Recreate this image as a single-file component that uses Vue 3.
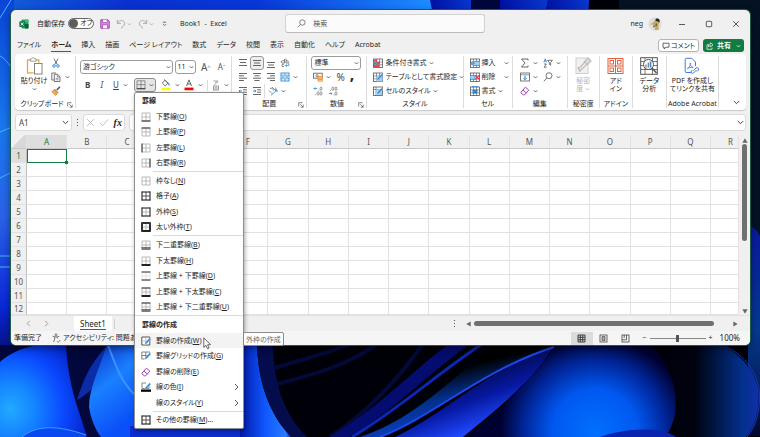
<script setup>
import { h } from 'vue'

const K = '#555'
const B = '#2b88d8'
const chev = '<path d="M.8 1.3 2.5 3 4.2 1.3" fill="none" stroke="#444" stroke-width=".8"/>'
const lines = (rows) => rows.map(([x, y, w]) => `<path d="M${x} ${y}h${w}" stroke="${K}" stroke-width=".9"/>`).join('')
const table = `<rect x=".5" y="1" width="9" height="8.5" fill="#fff" stroke="${K}" stroke-width=".8"/><path d="M.5 4h9M.5 6.8h9M3.5 1v8.5M6.5 1v8.5" stroke="${K}" stroke-width=".6"/>`
const pen = `<path d="M3.6 8.6 4.3 6.4 8.6 1.8 10 3.2 5.7 7.8Z" fill="${B}" stroke="#fff" stroke-width=".4"/>`
const eraser = '<path d="M1 6.2 5.4 1.2 8.8 4.2 4.6 8.8H3.3L1 6.9ZM2.9 4.1 6.4 7" fill="#fff" stroke="#a33fb5" stroke-width="1"/>'

const icons = {
  excel: [10, 10, '<rect x="2.5" y=".5" width="7" height="9" rx=".8" fill="#21a366"/><path d="M6 .5h2.7a.8.8 0 0 1 .8.8V3H6Z" fill="#33c481"/><path d="M6 5h3.500v3.700a.8.8 0 0 1-.8.8H6Z" fill="#185c37"/><rect x=".3" y="2.200" width="5.800" height="5.800" rx=".7" fill="#107c41"/><path d="m1.900 3.600 2.600 3M4.500 3.600l-2.600 3" stroke="#fff" stroke-width=".9"/>'],
  save: [10, 10, '<path d="M.8.8h7l1.400 1.400v7H.8Z" fill="#d99be0" stroke="#a33fb5" stroke-width="1"/><path d="M2.600.8v2.900h4.600V.8" fill="#fff" stroke="#a33fb5" stroke-width=".8"/><path d="M2.400 9.200V5.800h5.200v3.400" fill="#fff" stroke="#a33fb5" stroke-width=".8"/>'],
  undo: [10, 10, '<path d="M1.300.8v3.600h3.600M1.500 4.200C3.200 1.300 6 .8 7.600 2.300c1.700 1.600 1.100 3.500-.3 4.900L5 9.300" fill="none" stroke="#aaa"/>'],
  redo: [10, 10, '<path d="M8.700.8v3.600H5.100M8.500 4.200C6.800 1.300 4 .8 2.400 2.300.7 3.900 1.300 5.800 2.700 7.200L5 9.300" fill="none" stroke="#aaa"/>'],
  qat: [5, 6, '<path d="M.8 1.200h3.400M.9 3 2.500 4.600 4.100 3" fill="none" stroke="#555" stroke-width=".8"/>'],
  chev: [5, 4, chev],
  chevPale: [5, 4, chev.replace('#444', '#aaa')],
  chevWhite: [5, 4, chev.replace('#444', '#fff')],
  chevBig: [7, 5, '<path d="M.8 1 3.500 3.700 6.200 1" fill="none" stroke="#444"/>'],
  search: [9, 9, '<circle cx="5.400" cy="3.500" r="2.700" fill="none" stroke="#666" stroke-width=".8"/><path d="M3.500 5.400.7 8.300" stroke="#666" stroke-width=".8"/>'],
  avatar: [14, 14, '<defs><clipPath id="face"><circle cx="7" cy="7" r="6.700"/></clipPath></defs><g clip-path="url(#face)"><rect width="14" height="14" fill="#dedede"/><path d="M6 4.200c2-1.400 5-.6 5.200 1.600.1 1.700-.9 2.400-.8 4.200l.8 3H6.600l.5-3.600C5.500 9 5 8.400 4.600 7.600L1 7.200l3.400-.9Z" fill="#c6ab62"/><path d="M7.200 3.400c.2-2.200 3.800-2.600 4.300-.2l.3 2.200-2-1Z" fill="#222"/><path d="M8.200 6.500v2.700M5 10l2-1" stroke="#3a3326" stroke-width=".9"/></g>'],
  min: [8, 8, '<path d="M1 4.500h6" stroke="#333" stroke-width=".8"/>'],
  max: [8, 8, '<rect x="1.300" y="1.300" width="5.400" height="5.400" rx=".8" fill="none" stroke="#333" stroke-width=".8"/>'],
  close: [8, 8, '<path d="m1.200 1.200 5.600 5.600M6.800 1.200 1.200 6.800" stroke="#333" stroke-width=".8"/>'],
  comment: [8, 8, '<path d="M1 1.200h6v4H3.800L2.200 7V5.200H1Z" fill="none" stroke="#444" stroke-width=".8"/>'],
  share: [8, 8, '<path d="M3 2.800H1v4.500h5V5.500M4.600.8 7 2.800 4.600 4.700V3.600C3.400 3.600 2.700 4.200 2.400 5c0-1.900.8-3 2.200-3.100Z" fill="none" stroke="#fff" stroke-width=".7"/>'],
  paste: [17, 18, '<path d="M4.500 2.800h-3v13h6M10 2.800h2.800v3" fill="none" stroke="#f0a33a" stroke-width="1.300"/><path d="M4.300 1.900h1.300c.3-1.500 2.900-1.500 3.200 0h1.300v2.300H4.300Z" fill="#fff" stroke="#888" stroke-width=".8"/><rect x="8.500" y="6.500" width="7.500" height="10.500" fill="#fff" stroke="#777" stroke-width=".9"/>'],
  cut: [10, 10, `<path d="m3 .6 3.200 6M7 .6l-3.200 6" stroke="${K}" stroke-width=".8"/><circle cx="3" cy="8" r="1.300" fill="none" stroke="${B}" stroke-width=".9"/><circle cx="7" cy="8" r="1.300" fill="none" stroke="${B}" stroke-width=".9"/>`],
  copy: [10, 10, `<path d="M3.200 8H.8V1h4.400" fill="none" stroke="${K}" stroke-width=".8"/><path d="M3.300 2.300h3.200L9 4.700v4.800H3.300Z" fill="#fff" stroke="${K}" stroke-width=".8"/><path d="M6.300 2.500V5H9M4.600 6.300h3M4.600 7.800h3" fill="none" stroke="${K}" stroke-width=".6"/>`],
  brush: [10, 10, '<path d="M9 .8 5.800 3.900" stroke="#555" stroke-width="1.500"/><path d="m3.400 3 3.800 3.800" stroke="#555" stroke-width="1"/><path d="M3.200 3.800.8 5.500 4.600 9.400l1.900-2.500Z" fill="#f2a65a" stroke="#e0842a" stroke-width=".8"/>'],
  launcher: [6, 6, '<path d="M.7 4.500V.7h3.800M2.300 2.300l2.800 2.800M5.200 2.600v2.600H2.600" fill="none" stroke="#555" stroke-width=".7"/>'],
  borders: [10, 10, '<path d="M1 .8h8v7.700H1ZM5 .8v7.700M1 4.600h8" fill="none" stroke="#777" stroke-width=".8"/><path d="M.6 8.800h8.800" stroke="#333"/>'],
  fill: [10, 12, '<path d="M3.700 1.200 1.300 4.200 4.300 7 7 4Z" fill="#fff" stroke="#555" stroke-width=".8"/><path d="M3.200.5 7 4" stroke="#555" stroke-width=".8"/><path d="M7.200 3.200c1.400 1.300 1.700 2.500 1.300 3.500-1-.2-1.600-1.500-1.300-3.500Z" fill="#2b88d8"/><rect x=".5" y="8.600" width="9" height="2.600" fill="#ffff00"/>'],
  fontcolor: [10, 12, '<path d="M2.500 7 5 .9 7.500 7M3.300 5h3.400" fill="none" stroke="#555" stroke-width=".9"/><rect x=".5" y="8.600" width="9" height="2.600" fill="#fe0000"/>'],
  phonetic: [8, 11, '<path d="M1.500 1h4.500L4.500 3.200M3.800 2v1.500L2.600 4.800" fill="none" stroke="#888" stroke-width=".8"/><rect x="1.500" y="6" width="5" height="4" fill="none" stroke="#888" stroke-width=".8"/><path d="M1.500 8h5M4 6v4" stroke="#888" stroke-width=".6"/>'],
  alTop: [10, 10, lines([[1, 1.5, 8], [2, 4.500, 6], [1, 7.500, 8]])],
  alMid: [10, 10, lines([[1, 2.500, 8], [2, 5, 6], [1, 7.500, 8]])],
  alBot: [10, 10, lines([[1, 4.500, 8], [2, 7, 6], [1, 9.500, 8]])],
  alL: [10, 10, lines([[1, 1.500, 8], [1, 3.800, 5], [1, 6.200, 8], [1, 8.500, 5]])],
  alC: [10, 10, lines([[1, 1.500, 8], [2.500, 3.800, 5], [1, 6.200, 8], [2.500, 8.500, 5]])],
  alR: [10, 10, lines([[1, 1.500, 8], [4, 3.800, 5], [1, 6.200, 8], [4, 8.500, 5]])],
  outdent: [10, 10, lines([[1, 1.500, 8], [5, 3.800, 4], [5, 6.200, 4], [1, 8.500, 8]]) + `<path d="M4 5H1M2.300 3.700 1 5l1.300 1.300" fill="none" stroke="${B}" stroke-width=".9"/>`],
  indent: [10, 10, lines([[1, 1.500, 8], [5, 3.800, 4], [5, 6.200, 4], [1, 8.500, 8]]) + `<path d="M1 5h3M2.700 3.700 4 5 2.700 6.300" fill="none" stroke="${B}" stroke-width=".9"/>`],
  wrap: [10, 10, `<path d="M4.500 1v4H2.300a1.100 1.100 0 0 1 0-2.200h2.200M6 .5V5h1.300a1.100 1.100 0 0 0 0-2.200H6M4 6.200H2.200v2.400H4" fill="none" stroke="${K}" stroke-width=".7"/><path d="M8.800 5v2.600H5.500M6.700 6.300 5.400 7.600l1.300 1.300" fill="none" stroke="${B}" stroke-width=".8"/>`],
  merge: [10, 10, `<rect x="1" y="1" width="8" height="8" fill="#fff" stroke="${B}" stroke-width=".9"/><path d="M1 3.200h8M1 6.800h8M5 1v2.200M5 6.800V9" stroke="${B}" stroke-width=".7"/><path d="M2.300 5h5.400M3.300 4 2.300 5l1 1M6.700 4l1 1-1 1" fill="none" stroke="${B}" stroke-width=".7"/>`],
  orient: [10, 10, `<path d="m1 4.500 3 3M2 2.500c2-1 3 .5 3.500 1.800M4 1l3 3.200c1.500 0 1.500-2 .2-2.400" fill="none" stroke="${K}" stroke-width=".7"/><path d="M3 9.300 9 4M6.700 4H9v2.300" fill="none" stroke="${B}" stroke-width=".8"/>`],
  currency: [10, 10, `<rect x=".6" y="1.200" width="8.600" height="5" fill="#fff" stroke="${K}" stroke-width=".8"/><circle cx="4" cy="3.700" r="1.100" fill="none" stroke="${K}" stroke-width=".7"/><path d="M5 4.500h4.300v4.700H5ZM5 6h4.300M5 7.500h4.300" fill="#fbd7a6" stroke="#ed8b1c" stroke-width=".8"/>`],
  incDec: [10, 10, `<path d="M4.200 2.500H1M2.200 1.300 1 2.500l1.200 1.200" fill="none" stroke="${B}" stroke-width=".8"/><path d="M6 4.500v.6M2.300 8.500v.6" stroke="${K}" stroke-width=".8"/><ellipse cx="8" cy="2.700" rx="1" ry="1.700" fill="none" stroke="${K}" stroke-width=".6"/><ellipse cx="5" cy="7.500" rx="1" ry="1.700" fill="none" stroke="${K}" stroke-width=".6"/><ellipse cx="8" cy="7.500" rx="1" ry="1.700" fill="none" stroke="${K}" stroke-width=".6"/>`],
  decDec: [10, 10, `<path d="M.8 7.500H4M2.800 6.300 4 7.500 2.800 8.700" fill="none" stroke="${B}" stroke-width=".8"/><path d="M2.500 4.200v.6M6 8.700v.6" stroke="${K}" stroke-width=".8"/><ellipse cx="4.800" cy="2.700" rx="1" ry="1.700" fill="none" stroke="${K}" stroke-width=".6"/><ellipse cx="8" cy="2.700" rx="1" ry="1.700" fill="none" stroke="${K}" stroke-width=".6"/><ellipse cx="8" cy="7.500" rx="1" ry="1.700" fill="none" stroke="${K}" stroke-width=".6"/>`],
  cond: [10, 10, table + '<path d="M1 1.500h3.200v2.300H1ZM4 4h3v2.700H4Z" fill="#e8484d"/><path d="M1 7h5v2.200H1Z" fill="#e8484d"/><path d="M1 4.300h2.300v2.300H1Z" fill="#2b88d8"/>'],
  tblfmt: [10, 10, table + '<path d="M3.500 4h6v5.500h-6Z" fill="#9fd0f5"/>' + pen],
  cellsty: [10, 10, table.replace('M.5 4h9M.5 6.8h9M3.5 1v8.5M6.5 1v8.5', 'M.5 3.500h9M3 1v8.500') + '<path d="M3 3.500h6v5.500H3Z" fill="#9fd0f5"/>' + pen],
  insert: [10, 10, table + `<rect x="3" y="3.300" width="7" height="4" fill="#9fd0f5" stroke="${B}" stroke-width=".7"/><path d="M5 5.300H1M2.500 3.800 1 5.300l1.500 1.500" fill="none" stroke="${B}" stroke-width=".8"/>`],
  del: [10, 10, table + `<rect x="0" y="3.300" width="5" height="4" fill="#9fd0f5" stroke="${B}" stroke-width=".7"/><path d="m5.300 3.300 4 4M9.300 3.300l-4 4" stroke="#e8384d" stroke-width="1.100"/>`],
  format: [10, 10, table + `<rect x="2.500" y="3.600" width="5" height="4" fill="${B}"/><path d="M2.500.4h5M2.500 0v1.200M7.500 0v1.200" stroke="${B}" stroke-width=".7"/>`],
  sum: [10, 10, `<path d="M8 2.500V1H1.500l3.600 4-3.600 4H8V7.500" fill="none" stroke="${K}" stroke-width=".9"/>`],
  down: [10, 10, `<rect x=".6" y="1" width="8.800" height="8" fill="#fff" stroke="${K}" stroke-width=".8"/><path d="M.6 2.800h8.800" stroke="${K}" stroke-width=".6"/><path d="M5 3.500v4M3.300 6 5 7.700 6.700 6" fill="none" stroke="${B}"/>`],
  sort: [10, 10, `<path d="M.8 4.300 2.200.8l1.400 3.500M1.200 3.200h2" fill="none" stroke="${B}" stroke-width=".8"/><path d="M1 6h2.500L1 9.200h2.700" fill="none" stroke="${K}" stroke-width=".8"/><path d="M4.600 2.300h4.800L7.600 4.600v2.600l-1.200-.8V4.600Z" fill="none" stroke="${K}" stroke-width=".8"/>`],
  find: [10, 10, `<circle cx="6" cy="3.700" r="3" fill="none" stroke="${K}" stroke-width=".8"/><path d="M3.900 5.900.8 9.300" stroke="${K}" stroke-width=".8"/>`],
  eraser: [10, 10, eraser],
  sens: [17, 18, '<rect x="1" y="1" width="12" height="15.500" fill="#f1f1f1" stroke="#d0d0d0"/><path d="M3 12.500 10 5M5 14l7-7M3 10l2 5M13 1l3 3-3.500 3.500-3-3Z" fill="#ddd" stroke="#bdbdbd" stroke-width="1.200"/>'],
  addin: [17, 18, '<g fill="#fff" stroke="#e0603c" stroke-width="1"><rect x="1" y="1.500" width="15" height="15"/><path d="M8.500 1.500v15M1 9h15"/><rect x="3" y="3.500" width="3.500" height="3.500"/><rect x="10.500" y="3.500" width="3.500" height="3.500"/><rect x="3" y="11" width="3.500" height="3.500"/><rect x="10.500" y="11" width="3.500" height="3.500"/></g>'],
  analyze: [18, 18, `<rect x=".7" y=".7" width="16.600" height="16.600" fill="#fff" stroke="${K}"/><path d="M.7 4.500h16.600M.7 8.500h16.600M.7 12.500h16.600M5 .7v16.600M12.500.7v16.600" stroke="${K}" stroke-width=".8"/><circle cx="8.500" cy="7.500" r="5" fill="#fff" stroke="${K}"/><path d="m12 11 4.500 5" stroke="${K}" stroke-width="1.500"/><path d="M6 7.500v3M8.300 5.500v5" stroke="#777" stroke-width="1.200"/><path d="M10.500 4.500v6" stroke="${B}" stroke-width="1.600"/>`],
  pdf: [16, 18, '<path d="M7 15.500H2.200a1 1 0 0 1-1-1V2.300a1 1 0 0 1 1-1h5.600l3.700 3.800v4" fill="none" stroke="#3c7be0" stroke-width="1"/><path d="M3.300 11.500c2-.8 3.600-3.600 3-5.600-.8 1.500.8 4 3 4.600-2-.4-4.700.3-6 1Z" fill="none" stroke="#3c7be0" stroke-width=".8"/><path d="m9.300 13.700 2.800-2.800c1.300-1 3.300.8 2.200 2.200l-1.400 1.400M12.500 13l-3 3c-1.300 1.200-3.200-.6-2.100-2l.8-.9" fill="none" stroke="#3c7be0" stroke-width="1"/>'],
  dots: [3, 9, '<path d="M1 1h1v1H1ZM1 4h1v1H1ZM1 7h1v1H1Z" fill="#555"/>'],
  cancel: [9, 9, '<path d="m1 1 7 7M8 1 1 8" stroke="#bbb" stroke-width=".9"/>'],
  check: [10, 9, '<path d="m.8 4.800 2.800 3L9.300 1.300" fill="none" stroke="#bbb" stroke-width=".9"/>'],
  prev: [5, 7, '<path d="M3.800.8 1.200 3.500l2.600 2.700" fill="none" stroke="#999" stroke-width=".9"/>'],
  next: [5, 7, '<path d="m1.200.8 2.600 2.700-2.600 2.700" fill="none" stroke="#999" stroke-width=".9"/>'],
  sub: [5, 8, '<path d="m1 1 3 3-3 3" fill="none" stroke="#444" stroke-width=".9"/>'],
  up: [6, 5, '<path d="M3 .3 5.600 4.700H.4Z" fill="#666"/>'],
  dn: [6, 5, '<path d="M3 4.700.4.3h5.200Z" fill="#666"/>'],
  lt: [5, 6, '<path d="M.3 3 4.700.4v5.200Z" fill="#666"/>'],
  rt: [5, 6, '<path d="M4.700 3 .3 5.600V.4Z" fill="#666"/>'],
  a11y: [9, 10, `<circle cx="4" cy="1.700" r="1" fill="none" stroke="${K}" stroke-width=".7"/><path d="M.6 3.200c2 .9 5 .9 6.800 0M2.700 4v2L1.600 9M5.300 4v1.400M5 8.300l1 1L8.300 7" fill="none" stroke="${K}" stroke-width=".8"/>`],
  vNormal: [9, 9, '<path d="M1 1h7v7H1ZM1 3.300h7M1 5.700h7M3.300 1v7M5.700 1v7" fill="none" stroke="#333" stroke-width=".9"/>'],
  vPage: [9, 9, '<rect x="1" y="1" width="7" height="7" fill="none" stroke="#444" stroke-width=".8"/><path d="M3 2.500h3v4H3ZM3 3.800h3M3 5.200h3" fill="none" stroke="#444" stroke-width=".7"/>'],
  vBreak: [9, 9, '<rect x="1" y="1" width="7" height="7" fill="none" stroke="#444" stroke-width=".8"/><path d="M1 5.800h4.500V1M3.200 1v3" fill="none" stroke="#444" stroke-width=".8"/>'],
  drawBorder: [10, 10, '<path d="M.8 1h8v8h-8Z" fill="#fff" stroke="#555" stroke-width="1"/><path d="M4.800 1v8M.8 5h8" stroke="#aaa" stroke-width=".7"/>' + pen],
  drawGrid: [10, 10, '<path d="M.8 1h8v3M.8 1v7h3M4.800 1v7M.8 4.500h6" fill="none" stroke="#666" stroke-width=".8"/>' + pen],
  lineColor: [10, 10, '<path d="M5 1H1v5.500h7V4" fill="none" stroke="#666" stroke-width=".8"/><g transform="translate(0 -1)">' + pen + '</g><rect x="0" y="7.500" width="10" height="2.300" fill="#000"/>'],
  cursor: [8, 13, '<path d="M.8.8v9.500l2.200-2 1.500 3.500 1.600-.7-1.500-3.400h2.900Z" fill="#fff" stroke="#444" stroke-width=".8"/>'],
}

// Sides drawn on top of the pale grid: [top, right, bottom, left] widths
const sides = (t, r, b, l, inner = '#aaa', outer = '#aaa', double = false) => [10, 10,
  `<path d="M1 1h8v8H1Z" fill="none" stroke="${outer}" stroke-width=".8"/><path d="M5 1v8M1 5h8" stroke="${inner}" stroke-width=".8"/>` +
  (t ? `<path d="M.5 1h9" stroke="#333" stroke-width="${t}"/>` : '') +
  (r ? `<path d="M9 .5v9" stroke="#333" stroke-width="${r}"/>` : '') +
  (b ? `<path d="M.5 9h9" stroke="#222" stroke-width="${b}"/>` : '') +
  (l ? `<path d="M1 .5v9" stroke="#333" stroke-width="${l}"/>` : '') +
  (double ? '<path d="M.5 7.500h9" stroke="#555" stroke-width=".8"/>' : '')]
Object.assign(icons, {
  bBottom: sides(0, 0, 1, 0), bTop: sides(1, 0, 0, 0), bLeft: sides(0, 0, 0, 1), bRight: sides(0, 1, 0, 0),
  bNone: sides(0, 0, 0, 0), bAll: sides(1, 1, 1, 1, '#333'), bOut: sides(1, 1, 1, 1),
  bThick: sides(2, 2, 2, 2), bDouble: sides(0, 0, 1, 0, '#aaa', '#aaa', true), bHeavy: sides(0, 0, 2, 0),
  bTB: sides(1, 0, 1, 0, '#ddd', '#ddd'), bTH: sides(1, 0, 2, 0), bTD: sides(1, 0, 1, 0, '#aaa', '#aaa', true),
})

const Icon = (props) => {
  const [w, ht, body] = icons[props.name]
  return h('svg', { width: w, height: ht, viewBox: `0 0 ${w} ${ht}`, 'aria-hidden': 'true', innerHTML: body })
}
Icon.props = ['name']

const tabs = ['ファイル', 'ホーム', '挿入', '描画', 'ページ レイアウト', '数式', 'データ', '校閲', '表示', '自動化', 'ヘルプ', 'Acrobat']
const cols = 'ABCDEFGHIJKLMNOPQR'.split('')
const menu = [
  { head: '罫線' },
  { icon: 'bBottom', text: '下罫線', key: 'O' },
  { icon: 'bTop', text: '上罫線', key: 'P' },
  { icon: 'bLeft', text: '左罫線', key: 'L' },
  { icon: 'bRight', text: '右罫線', key: 'R' },
  { sep: true },
  { icon: 'bNone', text: '枠なし', key: 'N' },
  { icon: 'bAll', text: '格子', key: 'A' },
  { icon: 'bOut', text: '外枠', key: 'S' },
  { icon: 'bThick', text: '太い外枠', key: 'T' },
  { sep: true },
  { icon: 'bDouble', text: '下二重罫線', key: 'B' },
  { icon: 'bHeavy', text: '下太罫線', key: 'H' },
  { icon: 'bTB', text: '上罫線 + 下罫線', key: 'D' },
  { icon: 'bTH', text: '上罫線 + 下太罫線', key: 'C' },
  { icon: 'bTD', text: '上罫線 + 下二重罫線', key: 'U' },
  { sep: true, full: true },
  { head: '罫線の作成' },
  { icon: 'drawBorder', text: '罫線の作成', key: 'W', active: true },
  { icon: 'drawGrid', text: '罫線グリッドの作成', key: 'G' },
  { icon: 'eraser', text: '罫線の削除', key: 'E' },
  { icon: 'lineColor', text: '線の色', key: 'I', sub: true },
  { text: '線のスタイル', key: 'Y', sub: true },
  { sep: true },
  { icon: 'bAll', text: 'その他の罫線', key: 'M', tail: '...' },
]
</script>

<template>
  <div class="desktop" lang="ja">
    <svg class="wallpaper" viewBox="0 0 760 437" preserveAspectRatio="none" aria-hidden="true">
      <defs>
        <linearGradient id="top"><stop offset="0" stop-color="#1260d8" /><stop offset=".3" stop-color="#0a30d0" /><stop offset=".6" stop-color="#0838d8" /><stop offset="1" stop-color="#1c8cff" /></linearGradient>
        <linearGradient id="top2"><stop offset="0" stop-color="#0010a0" /><stop offset="1" stop-color="#0a38d0" /></linearGradient>
        <linearGradient id="left" x2="0" y2="1"><stop offset="0" stop-color="#0a44d8" /><stop offset=".35" stop-color="#1878ee" /><stop offset=".6" stop-color="#2a62e8" /><stop offset=".85" stop-color="#0a28d8" /><stop offset="1" stop-color="#040c70" /></linearGradient>
        <radialGradient id="petal" cx=".12" cy=".7" r=".95"><stop offset="0" stop-color="#22aaff" /><stop offset=".3" stop-color="#1484ff" /><stop offset=".65" stop-color="#0a48ff" /><stop offset="1" stop-color="#0420c0" /></radialGradient>
        <linearGradient id="petal2" x2=".4" y2="1"><stop offset="0" stop-color="#0a2fc8" /><stop offset=".5" stop-color="#1a80ff" /><stop offset="1" stop-color="#0a50f8" /></linearGradient>
        <linearGradient id="band"><stop offset="0" stop-color="#0418a8" /><stop offset=".5" stop-color="#0f58ff" /><stop offset=".9" stop-color="#2b7cff" /><stop offset="1" stop-color="#0a28a8" /></linearGradient>
        <linearGradient id="blade" x1=".35" y1=".3" x2=".6" y2=".8"><stop offset="0" stop-color="#000" /><stop offset=".5" stop-color="#03308c" /><stop offset=".9" stop-color="#0a3cb8" /><stop offset="1" stop-color="#2050ff" /></linearGradient>
        <linearGradient id="leaf" x1=".3" y1=".2" x2=".7" y2=".8"><stop offset="0" stop-color="#000018" /><stop offset=".6" stop-color="#0618a0" /><stop offset="1" stop-color="#2048ff" /></linearGradient>
        <radialGradient id="glow" gradientUnits="userSpaceOnUse" cx="595" cy="432" r="95"><stop offset="0" stop-color="#0070ff" /><stop offset=".45" stop-color="#0058f0" /><stop offset=".75" stop-color="#00269a" /><stop offset="1" stop-color="#000030" /></radialGradient>
        <linearGradient id="rim"><stop offset="0" stop-color="#00000a" /><stop offset=".4" stop-color="#00030f" /><stop offset=".85" stop-color="#03308c" /><stop offset="1" stop-color="#1030a8" /></linearGradient>
        <linearGradient id="rside" x2="0" y2="1"><stop offset="0" stop-color="#0818a0" /><stop offset=".5" stop-color="#053a90" /><stop offset="1" stop-color="#020830" /></linearGradient>
      </defs>
      <rect width="760" height="437" fill="#000008" />
      <rect width="432" height="20" fill="url(#top)" />
      <path d="M430 0h42v20h-38Z" fill="url(#top2)" />
      <path d="M471 0h30v20h-30Z" fill="#00063c" />
      <path d="M500 0h48l-4 20h-44Z" fill="url(#top2)" />
      <path d="M548 0h41l-1 20h-44Z" fill="url(#top2)" />
      <path d="M619 0h141v330H619Z" fill="#041224" />
      <path d="M748 224c8 5 10 8 12 12v200h-12Z" fill="url(#rside)" />
      <rect width="14" height="360" fill="url(#left)" />
      <path d="M0 18 11 0M0 56c4 2 8 6 11 12M0 132l12-5M0 178l12-6M0 256h12M0 267h12" fill="none" stroke="#48b8f8" stroke-width="1" />
      <path d="M0 345h134v92H0Z" fill="#03083c" />
      <path d="M0 362C14 350 30 343 66 344c1 20 4 40 11 62l10 31H0Z" fill="url(#petal)" />
      <path d="M77 400c6-20 14-38 30-54-2 26-8 42-30 54Z" fill="#0a2ca8" />
      <path d="M107 345c-8 24-18 44-18 62 2 12 6 22 12 30h34v-92Z" fill="url(#petal2)" />
      <path d="M108 345c8 22 14 38 27 50" fill="none" stroke="#3f90ff" stroke-width="2" />
      <path d="M22 437c14-12 36-12 64-2v2Z" fill="#0a48f0" />
      <path d="M22 437c14-12 36-12 64-2" fill="none" stroke="#3a9cff" />
      <path d="M130 426h160v11H130Z" fill="#0a2cd0" />
      <path d="M240 340h17c0 40 12 74 34 97h-51Z" fill="url(#band)" />
      <path d="M257 340h16c0 40 10 74 34 97h-16c-22-23-34-57-34-97Z" fill="#040c4c" />
      <path d="M275 368c24-8 60-16 84-28M277 384c40-10 80-22 104-44M330 437c40-26 70-60 96-97" fill="none" stroke="#05105c" stroke-width="4" opacity=".6" />
      <path d="M330 437c50-30 86-70 124-97h22c-40 26-76 66-126 97Z" fill="#050c70" />
      <path d="M352 437c50-30 88-66 136-97" fill="none" stroke="#0a28b8" stroke-width="3" />
      <path d="M380 437c56-22 100-66 174-90h-60c-36 24-74 70-134 90Z" fill="url(#blade)" />
      <path d="M395 437c54-26 90-66 158-90-18 32-56 62-90 90Z" fill="url(#leaf)" />
      <path d="M380 437c56-22 100-66 174-90" fill="none" stroke="#1c48f0" stroke-width="2" />
      <path d="M466 437c34-26 70-62 90-92h94c20 20 26 40 26 60 0 14-6 24-10 32Z" fill="url(#glow)" />
      <path d="M676 437c-2-18 2-34-2-52-4-18-12-30-22-40h68c20 8 34 24 38 44 2 18-2 36-12 48Z" fill="url(#rim)" />
      <path d="M600 437c20-8 60-12 76 0Z" fill="#0a24b0" />
      <path d="M722 345c20 8 34 24 37 44 2 18-2 36-12 48" fill="none" stroke="#1838b0" />
    </svg>

    <main class="window">
      <header class="titlebar">
        <div class="quick">
          <Icon name="excel" />
          <label class="autosave">自動保存
            <span class="switch"><input type="checkbox" role="switch" /><span>オフ</span></span>
          </label>
          <button class="plain" aria-label="上書き保存"><Icon name="save" /></button>
          <button class="plain split" aria-label="元に戻す"><Icon name="undo" /><Icon name="chevPale" /></button>
          <button class="plain split" aria-label="やり直し"><Icon name="redo" /><Icon name="chevPale" /></button>
          <button class="plain qat" aria-label="クイック アクセス"><Icon name="qat" /></button>
          <span class="doc">Book1&nbsp; -&nbsp; Excel</span>
        </div>
        <label class="search"><Icon name="search" /><input type="text" placeholder="検索" aria-label="検索" /></label>
        <div class="account">
          <span>neg</span><Icon name="avatar" />
          <button class="plain wbtn" aria-label="最小化"><Icon name="min" /></button>
          <button class="plain wbtn" aria-label="最大化"><Icon name="max" /></button>
          <button class="plain wbtn" aria-label="閉じる"><Icon name="close" /></button>
        </div>
      </header>

      <div class="tabrow">
        <nav class="tabs">
          <a v-for="t in tabs" :key="t" href="#" :class="{ on: t === 'ホーム' }">{{ t }}</a>
        </nav>
        <button class="comment"><Icon name="comment" />コメント</button>
        <button class="share"><Icon name="share" />共有<Icon name="chevWhite" class="end" /></button>
      </div>

      <div class="ribbon">
        <section class="group">
          <div class="body clip">
            <button class="big"><Icon name="paste" /><span>貼り付け</span><Icon name="chev" /></button>
            <div class="rows">
              <button class="plain" aria-label="切り取り"><Icon name="cut" /></button>
              <button class="plain" aria-label="コピー"><Icon name="copy" /><Icon name="chev" /></button>
              <button class="plain" aria-label="書式のコピー"><Icon name="brush" /></button>
            </div>
          </div>
          <h2 class="cliplabel">クリップボード<Icon name="launcher" class="launch" /></h2>
        </section>

        <section class="group">
          <div class="body font">
            <div class="line">
              <span class="select face"><select aria-label="フォント"><option>游ゴシック</option></select><Icon name="chev" /></span>
              <span class="select size"><select aria-label="フォント サイズ"><option>11</option></select><Icon name="chev" /></span>
              <button class="plain grow" aria-label="拡大">A<sup>^</sup></button>
              <button class="plain shrink" aria-label="縮小">A<sup>ˇ</sup></button>
            </div>
            <div class="line styles">
              <div class="marks">
                <button class="plain"><b>B</b></button>
                <button class="plain"><i>I</i></button>
                <button class="plain"><u>U</u><Icon name="chev" /></button>
              </div>
              <button class="plain pressed" aria-label="罫線"><Icon name="borders" /><Icon name="chev" /></button>
              <button class="plain" aria-label="塗りつぶしの色"><Icon name="fill" /><Icon name="chev" /></button>
              <button class="plain" aria-label="フォントの色"><Icon name="fontcolor" /><Icon name="chev" /></button>
              <button class="plain ruby" aria-label="ふりがな"><Icon name="phonetic" /><Icon name="chev" /></button>
            </div>
          </div>
        </section>

        <section class="group">
          <div class="body align">
            <button class="plain" aria-label="上揃え"><Icon name="alTop" /></button>
            <button class="plain boxed" aria-label="上下中央揃え"><Icon name="alMid" /></button>
            <button class="plain" aria-label="下揃え"><Icon name="alBot" /></button>
            <button class="plain" aria-label="折り返し"><Icon name="wrap" /></button>
            <button class="plain" aria-label="左揃え"><Icon name="alL" /></button>
            <button class="plain" aria-label="中央揃え"><Icon name="alC" /></button>
            <button class="plain" aria-label="右揃え"><Icon name="alR" /></button>
            <button class="plain" aria-label="セルを結合"><Icon name="merge" /><Icon name="chev" /></button>
            <button class="plain" aria-label="インデントを減らす"><Icon name="outdent" /></button>
            <button class="plain" aria-label="インデントを増やす"><Icon name="indent" /></button>
            <button class="plain orient" aria-label="方向"><Icon name="orient" /><Icon name="chev" /></button>
          </div>
          <h2>配置<Icon name="launcher" class="launch" /></h2>
        </section>

        <section class="group">
          <div class="body number">
            <span class="select"><select aria-label="表示形式"><option>標準</option></select><Icon name="chev" /></span>
            <div class="line">
              <button class="plain" aria-label="通貨"><Icon name="currency" /><Icon name="chev" /></button>
              <button class="plain pct">%</button>
              <button class="plain comma">,</button>
            </div>
            <div class="line">
              <button class="plain" aria-label="小数点以下を増やす"><Icon name="incDec" /></button>
              <button class="plain" aria-label="小数点以下を減らす"><Icon name="decDec" /></button>
            </div>
          </div>
          <h2>数値<Icon name="launcher" class="launch" /></h2>
        </section>

        <section class="group">
          <div class="body rows wide">
            <button class="plain"><Icon name="cond" />条件付き書式<Icon name="chev" /></button>
            <button class="plain"><Icon name="tblfmt" />テーブルとして書式設定<Icon name="chev" /></button>
            <button class="plain"><Icon name="cellsty" />セルのスタイル<Icon name="chev" /></button>
          </div>
          <h2>スタイル</h2>
        </section>

        <section class="group">
          <div class="body rows wide">
            <button class="plain"><Icon name="insert" />挿入<Icon name="chev" class="end" /></button>
            <button class="plain"><Icon name="del" />削除<Icon name="chev" class="end" /></button>
            <button class="plain"><Icon name="format" />書式<Icon name="chev" /></button>
          </div>
          <h2>セル</h2>
        </section>

        <section class="group">
          <div class="body edit">
            <button class="plain" aria-label="オート SUM"><Icon name="sum" /><Icon name="chev" /></button>
            <button class="plain" aria-label="並べ替え"><Icon name="sort" /><Icon name="chev" /></button>
            <button class="plain" aria-label="フィル"><Icon name="down" /><Icon name="chev" /></button>
            <button class="plain" aria-label="検索と選択"><Icon name="find" /><Icon name="chev" /></button>
            <button class="plain" aria-label="クリア"><Icon name="eraser" /><Icon name="chev" /></button>
          </div>
          <h2>編集</h2>
        </section>

        <section class="group">
          <div class="body"><button class="big" disabled><Icon name="sens" /><span>秘密<br />度 <Icon name="chevPale" /></span></button></div>
          <h2>秘密度</h2>
        </section>
        <section class="group">
          <div class="body"><button class="big"><Icon name="addin" /><span>アド<br />イン</span></button></div>
          <h2>アドイン</h2>
        </section>
        <section class="group">
          <div class="body"><button class="big"><Icon name="analyze" /><span>データ<br />分析</span></button></div>
        </section>
        <section class="group">
          <div class="body"><button class="big"><Icon name="pdf" /><span>PDF を作成し<br />てリンクを共有</span></button></div>
          <h2>Adobe Acrobat</h2>
        </section>
        <button class="plain collapse" aria-label="リボンを折りたたむ"><Icon name="chevBig" /></button>
      </div>

      <div class="formula">
        <label class="box name"><input type="text" value="A1" aria-label="名前ボックス" /><Icon name="chevBig" /></label>
        <Icon name="dots" />
        <div class="box tools">
          <button class="plain" aria-label="キャンセル"><Icon name="cancel" /></button>
          <button class="plain" aria-label="入力"><Icon name="check" /></button>
          <button class="plain fx">fx</button>
        </div>
        <label class="box entry"><input type="text" aria-label="数式バー" /><Icon name="chevBig" /></label>
      </div>

      <div class="sheet">
        <table>
          <colgroup><col class="c0" /><col v-for="c in 17" :key="c" /><col class="clast" /></colgroup>
          <thead>
            <tr><th class="corner"></th><th v-for="c in cols" :key="c" :class="{ sel: c === 'A' }">{{ c }}</th></tr>
          </thead>
          <tbody>
            <tr v-for="r in 12" :key="r">
              <th :class="{ sel: r === 1 }">{{ r }}</th>
              <td v-for="c in cols" :key="c" :class="{ cur: r === 1 && c === 'A' }"></td>
            </tr>
          </tbody>
        </table>
        <div class="vscroll"><Icon name="up" /><div class="track"><div class="thumb"></div></div><Icon name="dn" /></div>
      </div>

      <div class="sheets">
        <button class="plain" aria-label="前のシート"><Icon name="prev" /></button>
        <button class="plain" aria-label="次のシート"><Icon name="next" /></button>
        <button class="sheettab"><span>Sheet1</span></button>
        <span class="stick"></span>
        <Icon name="dots" class="grip" />
        <div class="hscroll"><Icon name="lt" /><div class="thumb"></div><Icon name="rt" /></div>
      </div>

      <footer class="status">
        <span>準備完了</span>
        <span class="a11y"><Icon name="a11y" />アクセシビリティ: 問題ありま</span>
        <div class="views">
          <button class="on" aria-label="標準"><Icon name="vNormal" /></button>
          <button aria-label="ページ レイアウト"><Icon name="vPage" /></button>
          <button aria-label="改ページ プレビュー"><Icon name="vBreak" /></button>
        </div>
        <button class="plain">−</button>
        <input type="range" min="0" max="200" value="100" aria-label="ズーム" />
        <button class="plain">+</button>
        <span class="pct100">100%</span>
      </footer>
    </main>

    <div class="menu" role="menu">
      <template v-for="(m, i) in menu" :key="i">
        <h3 v-if="m.head">{{ m.head }}</h3>
        <hr v-else-if="m.sep" :class="{ full: m.full }" />
        <button v-else role="menuitem" :class="{ active: m.active }">
          <span class="ic"><Icon v-if="m.icon" :name="m.icon" /></span>
          <span>{{ m.text }}(<u>{{ m.key }}</u>){{ m.tail }}</span>
          <Icon v-if="m.sub" name="sub" class="end" />
        </button>
      </template>
    </div>
    <div class="tip" role="tooltip">外枠の作成</div>
    <Icon name="cursor" class="cursor" />
  </div>
</template>

<style>
body { margin: 0; }
</style>

<style scoped>
.desktop {
  position: relative;
  box-sizing: border-box;
  min-height: 100vh;
  padding: 10px 10px 0 11px;
  overflow: hidden;
  font: 7px/10px "Noto Sans", "Noto Sans CJK JP", sans-serif;
  font-feature-settings: "palt";
  color: #262626;
}
.desktop * { box-sizing: border-box; }
.desktop svg { flex: none; display: block; }
.desktop .wallpaper { position: absolute; inset: 0; width: 100%; height: 100%; }
button, input, select { font: inherit; font-feature-settings: inherit; color: inherit; margin: 0; padding: 0; border: 0; background: none; outline: none; }
button { display: flex; align-items: center; white-space: nowrap; }
input { min-width: 0; }
h2, h3 { margin: 0; font-size: 7px; font-weight: 400; }
.end { margin-left: auto; }

.window {
  position: relative;
  background: #f0f0f0;
  border-radius: 5px;
  box-shadow: 0 0 0 1px #1c5c48, 0 3px 8px rgba(0, 0, 0, .5);
}

.titlebar { display: grid; grid-template-columns: 274fr 199fr 265fr; align-items: center; height: 27px; }
.quick { display: flex; align-items: center; padding-left: 8px; gap: 6px; }
.autosave { display: flex; align-items: center; gap: 3px; padding-left: 2px; }
.switch { position: relative; display: flex; }
.switch input { appearance: none; display: flex; align-items: center; width: 26px; height: 11px; border: 1px solid #666; border-radius: 6px; background: #fff; }
.switch input::before { content: ""; width: 9px; height: 9px; border-radius: 50%; background: #5c5c5c; }
.switch span { position: absolute; left: 12px; top: 0; }
.split { gap: 1px; }
.qat { padding: 0 2px; }
.doc { padding-left: 5px; white-space: nowrap; }
.search { display: flex; align-items: center; gap: 7px; height: 19px; padding: 0 11px; background: #fbfbfb; border: 1px solid #d2d2d2; border-bottom-color: #bbb; border-radius: 3px; }
.search input { flex: 1; }
.search input::placeholder { color: #555; opacity: 1; }
.account { display: flex; align-items: center; justify-content: flex-end; gap: 5px; padding-right: 3px; }
.wbtn { justify-content: center; width: 22px; height: 20px; }
.account .wbtn:first-of-type { margin-left: 4px; }

.tabrow { display: flex; align-items: center; height: 17px; padding: 0 6px; gap: 4px; }
.tabs { display: flex; gap: 10px; flex: 1; }
.tabs a { color: #262626; text-decoration: none; white-space: nowrap; height: 12px; border-bottom: 1px solid transparent; }
.tabs .on { font-weight: 700; border-color: #107c41; }
.comment, .share { height: 13px; border-radius: 3px; }
.comment { justify-content: center; gap: 1px; background: #fff; border: 1px solid #b4b4b4; width: 41px; }
.share { background: #107c41; color: #fff; font-weight: 700; width: 41px; gap: 3px; padding: 0 3px; }

.ribbon {
  display: grid;
  grid-template-columns: minmax(0, 61fr) minmax(0, 156fr) minmax(0, 75fr) minmax(0, 60fr) minmax(0, 96fr) minmax(0, 49fr) minmax(0, 55fr) minmax(0, 32fr) minmax(0, 33fr) minmax(0, 34fr) minmax(0, 52fr) minmax(0, 27fr);
  margin: 0 4px;
  padding: 2px 0 0;
  height: 56px;
  background: #fff;
  border-radius: 4px;
  box-shadow: 0 1px 1px #c8c8c8;
}
.group { position: relative; display: flex; flex-direction: column; height: 52px; border-right: 1px solid #dcdcdc; }
.body { height: 42px; }
.group h2 { height: 12px; line-height: 12px; text-align: center; white-space: nowrap; display: flex; justify-content: center; }
.group .cliplabel { padding-right: 6px; }
.launch { position: absolute; right: 2px; bottom: 0; }
.rows { display: grid; grid-template-rows: repeat(3, 14px); }
.rows button { gap: 4px; }
.rows.wide { padding-left: 6px; }
.rows.wide button { gap: 2px; padding-right: 3px; }
.clip { display: grid; grid-template-columns: 36px 1fr; }
.big { flex-direction: column; width: 100%; height: 42px; padding-top: 1px; line-height: 8px; gap: 2px; justify-content: flex-start; text-align: center; }
.big span svg { display: inline-block; }
.big:disabled { color: #b5b5b5; }
.clip .big { padding-left: 2px; }
.font { display: flex; flex-direction: column; padding: 4px 2px 0 4px; gap: 4px; }
.line { display: flex; align-items: center; height: 14px; gap: 2px; }
.marks { display: flex; gap: 10px; font-size: 8px; width: 51px; }
.marks b, .marks i, .marks u { color: #444; }
.styles { gap: 4px; padding-left: 5px; }
.styles button { gap: 4px; }
.select { position: relative; display: flex; height: 14px; border: 1px solid #9c9c9c; border-radius: 3px; background: #fff; }
.select select { appearance: none; width: 100%; padding-left: 2px; }
.select svg { position: absolute; right: 1px; top: 4px; }
.face { width: 95px; }
.size { width: 22px; }
.grow, .shrink { width: 15px; font-size: 10px; padding-left: 3px; color: #555; }
.shrink { font-size: 8px; }
.grow sup, .shrink sup { font-size: 6px; line-height: 6px; color: #2b88d8; }
.styles .pressed { height: 14px; width: 22px; gap: 3px; padding: 0 1px; margin: 0 1px 0 -3px; background: #e6e6e6; border: 1px solid #8c8c8c; border-radius: 3px; }
.ruby { padding-left: 4px; border-left: 1px solid #dcdcdc; }
.align { display: grid; grid-template-columns: 14px 14px 14px 1fr; grid-template-rows: repeat(3, 14px); padding-left: 4px; }
.align button { gap: 3px; padding-left: 2px; }
.align .orient { grid-column: 3 / 5; padding-left: 3px; border-left: 1px solid #dcdcdc; }
.align .boxed { border: 1px solid #999; border-radius: 3px; background: #eee; padding-left: 1px; }
.number { display: grid; grid-template-rows: repeat(3, 14px); padding: 0 5px 0 4px; }
.number .line { gap: 5px; padding-left: 2px; }
.number .line button { gap: 3px; }
.number .pct { font-size: 10px; color: #444; }
.comma { font-size: 16px; font-weight: 700; line-height: 8px; padding-bottom: 6px; }
.edit { display: grid; grid-template-columns: 23px 1fr; grid-template-rows: repeat(3, 14px); padding-left: 7px; }
.edit button { gap: 3px; }
.collapse { justify-content: center; align-items: flex-end; padding: 0 0 5px 9px; }

.formula { display: flex; align-items: center; gap: 4px; height: 25px; padding: 0 4px; }
.box { display: flex; align-items: center; height: 17px; background: #fff; border: 1px solid #dadada; border-radius: 3px; }
.box input { flex: 1; font-size: 8px; color: #444; }
.name { width: 57px; padding: 0 2px 0 3px; }
.tools { width: 42px; justify-content: space-around; }
.fx { font: italic 700 10px/10px "Liberation Serif", serif; }
.entry { flex: 1; padding: 0 1px 0 3px; }

.sheet { display: flex; }
table { flex: 1; width: 0; table-layout: fixed; border-spacing: 0; }
.c0 { width: 16px; }
.clast { width: 28px; }
th, td { padding: 0; height: 14px; line-height: 12px; overflow: hidden; border-right: 1px solid #e2e2e2; border-bottom: 1px solid #e2e2e2; }
th { font-size: 8px; font-weight: 400; color: #555; background: #f0f0f0; }
thead th { height: 14px; border-bottom-color: #c8c8c8; }
thead th:last-child { text-align: right; padding-right: 5px; }
tbody th { border-right-color: #c0c0c0; }
td { background: #fff; }
tbody tr:last-child th, tbody tr:last-child td { height: 12px; line-height: 11px; }
th.sel { background: #dedede; color: #107c41; }
.corner { background: linear-gradient(135deg, transparent 50%, #d8d8d8 50%); }
td.cur { position: relative; overflow: visible; border-color: #107c41; box-shadow: inset 1px 1px 0 #107c41; }
td.cur::after { content: ""; position: absolute; right: -2px; bottom: -2px; width: 3px; height: 3px; background: #107c41; }
.vscroll { display: flex; flex-direction: column; align-items: center; width: 11px; padding: 3px 0 1px; }
.track { flex: 1; padding-top: 1px; }
.vscroll .thumb { width: 5px; height: 97px; border-radius: 3px; background: #707070; }

.sheets { display: flex; align-items: center; height: 16px; padding: 0 12px 0 15px; gap: 13px; border-top: 1px solid #e2e2e2; }
.sheettab { align-items: center; height: 15px; padding: 0 6px; margin-left: 12px; background: #fff; border-radius: 0 0 3px 3px; font-size: 8px; }
.sheettab span { border-bottom: 1px solid #107c41; height: 12px; line-height: 11px; }
.stick { width: 1px; height: 10px; margin-left: -11px; background: #d0d0d0; }
.grip { margin-left: auto; }
.hscroll { display: flex; align-items: center; gap: 3px; width: 272px; margin-left: -3px; }
.hscroll .thumb { width: 240px; height: 5px; border-radius: 3px; background: #707070; }
.hscroll svg:last-child { margin-left: auto; }

.status { display: flex; align-items: center; height: 14px; padding: 0 10px 0 3px; background: #f5f5f5; border-radius: 0 0 5px 5px; gap: 3px; }
.a11y { display: flex; align-items: center; gap: 2px; margin-left: 7px; white-space: nowrap; }
.views { display: flex; height: 13px; margin: 0 3px 0 auto; }
.views button { width: 22px; justify-content: center; }
.views .on { background: #dcdcdc; }
input[type="range"] { appearance: none; width: 56px; height: 8px; background: linear-gradient(#888, #888) center / 100% 1px no-repeat; }
input[type="range"]::-webkit-slider-thumb { appearance: none; width: 3px; height: 7px; background: #555; }
.pct100 { padding-left: 4px; font-size: 8px; }

.menu {
  position: absolute;
  left: 134px;
  top: 92px;
  bottom: 8px;
  width: 110px;
  display: flex;
  flex-direction: column;
  background: #fff;
  border: 1px solid #8f8f8f;
  border-radius: 2px;
  box-shadow: 1px 2px 4px rgba(0, 0, 0, .35);
}
.menu h3 { height: 16px; line-height: 15px; padding-left: 7px; font-weight: 700; }
.menu button { flex: 1; gap: 4px; padding: 0 4px 0 6px; text-align: left; }
.menu .active { background: #f3f3f3; }
.menu .ic { width: 11px; }
.menu hr { margin: 0 0 1px 18px; height: 1px; border: 0; background: #dadada; }
.menu hr.full { margin-left: 0; }
.tip { position: absolute; left: 243px; top: 332px; padding: 1px 2px 0; background: #fff; border: 1px solid #8a8a8a; border-radius: 2px; color: #666; white-space: nowrap; line-height: 11px; }
.cursor { position: absolute; left: 203px; top: 337px; }
</style>
